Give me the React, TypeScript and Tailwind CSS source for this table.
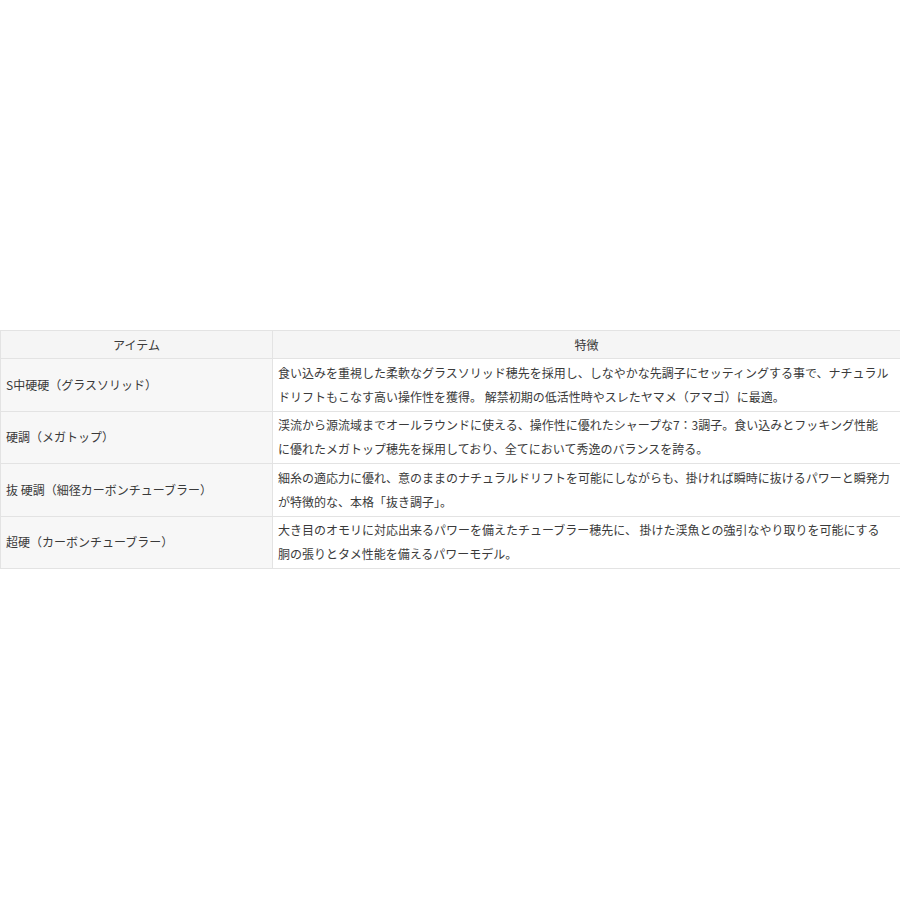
import React from "react";

const rows: { item: string; lines: string[] }[] = [
  {
    item: "S中硬硬（グラスソリッド）",
    lines: [
      "食い込みを重視した柔軟なグラスソリッド穂先を採用し、しなやかな先調子にセッティングする事で、ナチュラル",
      "ドリフトもこなす高い操作性を獲得。 解禁初期の低活性時やスレたヤマメ（アマゴ）に最適。",
    ],
  },
  {
    item: "硬調（メガトップ）",
    lines: [
      "渓流から源流域までオールラウンドに使える、操作性に優れたシャープな7：3調子。食い込みとフッキング性能",
      "に優れたメガトップ穂先を採用しており、全てにおいて秀逸のバランスを誇る。",
    ],
  },
  {
    item: "抜 硬調（細径カーボンチューブラー）",
    lines: [
      "細糸の適応力に優れ、意のままのナチュラルドリフトを可能にしながらも、掛ければ瞬時に抜けるパワーと瞬発力",
      "が特徴的な、本格「抜き調子」。",
    ],
  },
  {
    item: "超硬（カーボンチューブラー）",
    lines: [
      "大き目のオモリに対応出来るパワーを備えたチューブラー穂先に、 掛けた渓魚との強引なやり取りを可能にする",
      "胴の張りとタメ性能を備えるパワーモデル。",
    ],
  },
];

export default function App() {
  return (
    <div
      className="w-[900px] h-[900px] bg-white pt-[330px] overflow-hidden text-[#3a3a3a] text-[12px]"
      style={{ fontFamily: '"Noto Sans CJK JP", "Noto Sans", sans-serif' }}
    >
      <table className="w-[901px] border-collapse">
        <thead>
          <tr className="bg-[#f5f5f5]">
            <th className="w-[272px] h-[28px] border border-[#e3e3e3] font-normal text-center leading-[26px] p-0">
              アイテム
            </th>
            <th className="h-[28px] border border-[#e3e3e3] font-normal text-center leading-[26px] p-0">
              特徴
            </th>
          </tr>
        </thead>
        <tbody>
          {rows.map((r) => (
            <tr key={r.item}>
              <td className="w-[272px] bg-[#f7f7f7] border border-[#e3e3e3] px-[5px] py-[1.75px] align-middle whitespace-nowrap leading-[24px]">
                {r.item}
              </td>
              <td className="border border-[#e3e3e3] pl-[5px] pr-0 py-[1.75px] leading-[24px] whitespace-nowrap">
                {r.lines.map((l, i) => (
                  <div key={i}>{l}</div>
                ))}
              </td>
            </tr>
          ))}
        </tbody>
      </table>
    </div>
  );
}
